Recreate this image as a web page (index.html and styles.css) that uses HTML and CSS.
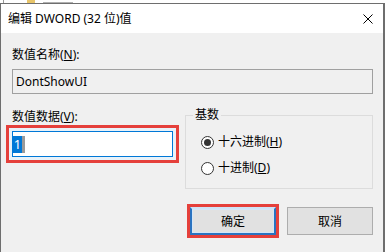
FILE: index.html
```html
<!DOCTYPE html>
<html lang="zh-CN">

<head>
    <meta charset="UTF-8" />
    <title>编辑 DWORD (32 位)值</title>
    <link rel="stylesheet" href="styles.css">
</head>

<body>

    <!-- bit of the registry list peeking out above the dialog -->
    <div class="behind">
        <span class="mark"></span>
        <span class="folder"></span>
        <span class="behind-text"></span>
    </div>

    <div class="window">
        <div class="titlebar">
            <span class="title">编辑 DWORD (32 位)值</span>
            <svg class="close" width="10" height="10" viewBox="0 0 10 10">
                <path d="M0.5 0.5 L9.5 9.5 M9.5 0.5 L0.5 9.5" stroke="#000" stroke-width="1" fill="none" />
            </svg>
        </div>

        <div class="content">
            <label class="field-label">数值名称(<u>N</u>):</label>
            <div class="edit readonly">DontShowUI</div>

            <div class="middle">
                <div class="data-col">
                    <label class="field-label">数值数据(<u>V</u>):</label>
                    <div class="edit focused"><span class="sel">1</span><span class="caret"></span></div>
                </div>

                <fieldset class="base">
                    <legend>基数</legend>
                    <label class="radio"><span class="dot checked"></span><span>十六进制(<u>H</u>)</span></label>
                    <label class="radio"><span class="dot"></span><span>十进制(<u>D</u>)</span></label>
                </fieldset>
            </div>

            <div class="buttons">
                <button class="btn default">确定</button>
                <button class="btn">取消</button>
            </div>
        </div>
    </div>

</body>

</html>
```

FILE: styles.css
```css
* {
    box-sizing: border-box;
    margin: 0;
    padding: 0;
}

body {
    width: 385px;
    height: 252px;
    overflow: hidden;
    background: #fff;
    color: #000;
    font-family: "Noto Sans", "Noto Sans CJK SC", sans-serif;
    font-size: 12px;
}

u {
    text-underline-offset: 1px;
}

/* registry list behind the dialog */
.behind {
    height: 3px;
    display: flex;
    align-items: flex-end;
    background: #fff;
}

.behind .mark {
    width: 1px;
    height: 3px;
    margin-left: 3px;
    background: #999;
}

.behind .folder {
    width: 8px;
    height: 3px;
    margin-left: 23px;
    background: #e8c56a;
}

.behind .behind-text {
    width: 30px;
    height: 1px;
    margin-left: 8px;
    background: #b0b0b0;
}

.window {
    height: 249px;
    display: flex;
    flex-direction: column;
    border: 1px solid #6e6e6e;
    border-right-width: 2px;
    border-bottom: none;
}

.titlebar {
    height: 29px;
    display: flex;
    align-items: center;
    justify-content: space-between;
    padding: 0 10px 0 7px;
    background: #fff;
}

.title {
    line-height: 16px;
}

.close {
    display: block;
}

.content {
    flex: 1;
    background: #f0f0f0;
    padding: 14px 10px 0 11px;
}

.field-label {
    display: block;
    line-height: 16px;
}

.edit {
    display: flex;
    align-items: center;
    margin-top: 6px;
    line-height: 16px;
}

.edit.readonly {
    height: 25px;
    padding-left: 3px;
    border: 1px solid #a0a0a0;
    background: #f0f0f0;
}

.edit.focused {
    height: 26px;
    padding-left: 0;
    border: 1px solid #0078d7;
    background: #fff;
    box-shadow: 0 0 0 3px #e8f2f9;
    outline: 3px solid #e5403b;
    outline-offset: 3px;
}

.sel {
    display: block;
    width: 9px;
    height: 17px;
    line-height: 17px;
    text-align: center;
    font-size: 13px;
    background: #0078d7;
    color: #fff;
}

.caret {
    display: block;
    width: 3px;
    height: 17px;
    background: #9a9a9a;
}

.middle {
    display: flex;
    gap: 12px;
    margin-top: 13px;
}

.data-col {
    width: 161px;
    padding-top: 2px;
}

.base {
    flex: 1;
    height: 82px;
    border: 1px solid #dcdcdc;
    padding: 11px 0 0 15px;
}

.base legend {
    line-height: 16px;
    padding: 0 2px;
    margin-left: -8px;
}

.radio {
    display: flex;
    align-items: center;
    gap: 4px;
    line-height: 16px;
}

.radio + .radio {
    margin-top: 10px;
}

.dot {
    width: 13px;
    height: 13px;
    border: 1px solid #333;
    border-radius: 50%;
    background: #fff;
    display: flex;
    align-items: center;
    justify-content: center;
}

.dot.checked::after {
    content: "";
    width: 7px;
    height: 7px;
    border-radius: 50%;
    background: #333;
}

.buttons {
    display: flex;
    justify-content: flex-end;
    gap: 11px;
    margin-top: 18px;
}

.btn {
    width: 86px;
    height: 28px;
    font-family: inherit;
    font-size: 12px;
    color: #000;
    background: #e1e1e1;
    border: 1px solid #adadad;
}

.btn.default {
    border: 2px solid #2a73c0;
    border-top-color: #cfe3f6;
    box-shadow: inset 0 0 0 1px #d4e6f7;
    outline: 3px solid #e5403b;
    outline-offset: 0;
}
```
